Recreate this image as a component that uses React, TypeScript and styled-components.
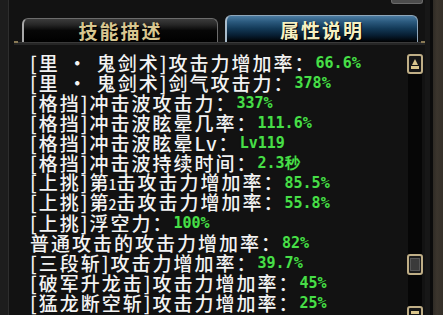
import React from "react";
import styled, { createGlobalStyle } from "styled-components";

const Global = createGlobalStyle`
  html, body { margin: 0; padding: 0; background: #131313; }
  #root { width: 443px; height: 315px; }
`;

const Frame = styled.div`
  width: 443px;
  height: 315px;
  display: flex;
  overflow: hidden;
  background: #131313;
`;

const LeftRail = styled.div`
  width: 8px;
  flex: none;
  background: #1d1d1d;
  border-right: 1px solid #2e2e2e;
`;

const RightRail = styled.div`
  width: 18px;
  flex: none;
  background: linear-gradient(90deg, #171717 0, #171717 5px, #0b0b0b 5px, #0b0b0b 8px, #2f2b25 8px, #3b352d 12px, #342f28 18px);
`;

const Panel = styled.div`
  flex: 1;
  display: flex;
  flex-direction: column;
  min-width: 0;
  background: #121212;
`;

const TopBar = styled.div`
  height: 15px;
  flex: none;
  display: flex;
  justify-content: flex-end;
  padding-right: 2px;
`;

const TopKnob = styled.div`
  width: 30px;
  height: 3px;
  background: #4c4c4c;
  border: 1px solid #6a6a6a;
  border-top: none;
  border-radius: 0 0 3px 3px;
`;

const TabRow = styled.div`
  height: 27px;
  flex: none;
  display: flex;
  align-items: flex-end;
  gap: 7px;
  padding-left: 13px;
`;

const Tab = styled.div<{ $active?: boolean }>`
  box-sizing: border-box;
  width: ${(p) => (p.$active ? 193 : 196)}px;
  height: ${(p) => (p.$active ? 27 : 24)}px;
  display: flex;
  align-items: center;
  justify-content: center;
  border-radius: 6px 6px 0 0;
  border: 1px solid ${(p) => (p.$active ? "#8ea6ba" : "#6c6c6c")};
  border-left: 2px solid ${(p) => (p.$active ? "#a9bccb" : "#a8a8a8")};
  border-bottom: none;
  background: ${(p) =>
    p.$active
      ? "linear-gradient(180deg, #4c7ca2 0%, #2b5a7e 22%, #133a58 48%, #071d31 75%, #000 100%)"
      : "linear-gradient(180deg, #3b3b3b 0%, #262626 25%, #070707 50%, #000 100%)"};
  font-family: "Noto Sans CJK SC", sans-serif;
  font-weight: 700;
  font-size: 19px;
  letter-spacing: 2px;
  color: ${(p) => (p.$active ? "#f6f0c2" : "#d8c690")};
  text-shadow: 1px 1px 0 #000;
  line-height: 1;
  padding-top: ${(p) => (p.$active ? 1 : 0)}px;
`;

const Baseline = styled.div`
  height: 2px;
  flex: none;
  margin-left: 5px;
  background: #262626;
  border-top: 1px solid #3a3a3a;
  display: flex;
  justify-content: space-between;
  &::before, &::after {
    content: "";
    width: 4px;
    height: 2px;
    margin-top: -2px;
    background: #8a7a55;
  }
`;

const Body = styled.div`
  flex: 1;
  display: flex;
  min-height: 0;
  overflow: hidden;
`;

const List = styled.div`
  flex: 1;
  padding: 8px 0 0 21px;
  display: flex;
  flex-direction: column;
`;

const Row = styled.div`
  height: 20px;
  flex: none;
  display: flex;
  align-items: center;
  white-space: nowrap;
`;

const Label = styled.span`
  font-family: "Noto Sans CJK SC", sans-serif;
  font-weight: 500;
  font-size: 19px;
  letter-spacing: 2px;
  color: #f3f3f3;
  line-height: 20px;
`;

const Dot = styled.span`
  padding: 0 8px;
`;

const Num = styled.span`
  font-size: 14px;
  letter-spacing: 0;
  margin: 0 0 0 -2px;
`;

const Value = styled.span`
  font-family: "DejaVu Sans Mono", monospace;
  font-weight: 700;
  font-size: 15px;
  color: #48de48;
  text-shadow: 0 0 1px #0c3a0c;
  line-height: 20px;
`;

const ScrollCol = styled.div`
  width: 16px;
  flex: none;
  margin-right: 2px;
  padding-top: 9px;
  display: flex;
  flex-direction: column;
  align-items: center;
`;

const ArrowBtn = styled.div<{ $down?: boolean }>`
  box-sizing: border-box;
  width: 16px;
  height: 20px;
  flex: none;
  border: 2px solid #bfae86;
  border-radius: 3px;
  background: #161616;
  display: flex;
  flex-direction: ${(p) => (p.$down ? "column-reverse" : "column")};
  align-items: center;
  justify-content: center;
  gap: 1px;
`;

const Tri = styled.div<{ $down?: boolean }>`
  width: 0;
  height: 0;
  border-left: 3px solid transparent;
  border-right: 3px solid transparent;
  ${(p) => (p.$down ? "border-top: 6px solid #d9c58c;" : "border-bottom: 6px solid #d9c58c;")}
`;

const Bar = styled.div`
  width: 8px;
  height: 3px;
  background: #d9c58c;
`;

const Track = styled.div`
  width: 14px;
  flex: none;
  height: 232px;
  background: #060606;
  display: flex;
  flex-direction: column;
  align-items: center;
`;

const Thumb = styled.div`
  box-sizing: border-box;
  width: 16px;
  height: 21px;
  margin-top: 180px;
  border: 2px solid #bfae86;
  border-radius: 3px;
  background: #1b1b1b;
  display: flex;
  align-items: center;
  justify-content: center;
  &::after {
    content: "";
    width: 8px;
    height: 11px;
    background: #3a3a3a;
    border: 1px solid #555;
  }
`;

type Item = { key: string; label: React.ReactNode; value: string };

const rows: Item[] = [
  { key: "a", label: <>[里<Dot>・</Dot>鬼剑术]攻击力增加率：</>, value: "66.6%" },
  { key: "b", label: <>[里<Dot>・</Dot>鬼剑术]剑气攻击力：</>, value: "378%" },
  { key: "c", label: "[格挡]冲击波攻击力：", value: "337%" },
  { key: "d", label: "[格挡]冲击波眩晕几率：", value: "111.6%" },
  { key: "e", label: "[格挡]冲击波眩晕Lv：", value: "Lv119" },
  { key: "f", label: "[格挡]冲击波持续时间：", value: "2.3秒" },
  { key: "g", label: <>[上挑]第<Num>1</Num>击攻击力增加率：</>, value: "85.5%" },
  { key: "h", label: <>[上挑]第<Num>2</Num>击攻击力增加率：</>, value: "55.8%" },
  { key: "i", label: "[上挑]浮空力：", value: "100%" },
  { key: "j", label: "普通攻击的攻击力增加率：", value: "82%" },
  { key: "k", label: "[三段斩]攻击力增加率：", value: "39.7%" },
  { key: "l", label: "[破军升龙击]攻击力增加率：", value: "45%" },
  { key: "m", label: "[猛龙断空斩]攻击力增加率：", value: "25%" },
];

export default function App() {
  return (
    <>
      <Global />
      <Frame>
        <LeftRail />
        <Panel>
          <TopBar>
            <TopKnob />
          </TopBar>
          <TabRow>
            <Tab>技能描述</Tab>
            <Tab $active>属性说明</Tab>
          </TabRow>
          <Baseline />
          <Body>
            <List>
              {rows.map((r) => (
                <Row key={r.key}>
                  <Label>{r.label}</Label>
                  <Value>{r.value}</Value>
                </Row>
              ))}
            </List>
            <ScrollCol>
              <ArrowBtn>
                <Tri />
                <Bar />
              </ArrowBtn>
              <Track>
                <Thumb />
              </Track>
              <ArrowBtn $down>
                <Tri $down />
                <Bar />
              </ArrowBtn>
            </ScrollCol>
          </Body>
        </Panel>
        <RightRail />
      </Frame>
    </>
  );
}
